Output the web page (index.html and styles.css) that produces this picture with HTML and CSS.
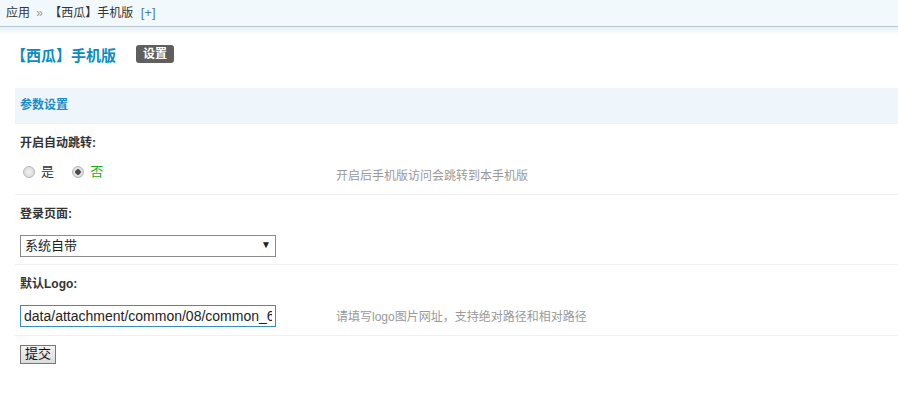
FILE: index.html
```html
<!DOCTYPE html>
<html lang="zh-CN">

<head>
    <meta charset="UTF-8">
    <title>【西瓜】手机版</title>
    <link rel="stylesheet" href="styles.css">
</head>

<body>
    <div class="crumb">应用 <span class="arrow">»</span> 【西瓜】手机版 <span class="add">[+]</span></div>
    <div class="shade"></div>

    <div class="head">
        <h3>【西瓜】手机版</h3>
        <span class="badge">设置</span>
    </div>

    <table class="tb">
        <tr>
            <th colspan="2" class="partition">参数设置</th>
        </tr>
        <tr>
            <td colspan="2" class="label">开启自动跳转:</td>
        </tr>
        <tr class="noborder">
            <td class="rowform">
                <label class="radio"><input type="radio" name="jump" value="1"> 是</label>
                <label class="radio checked"><input type="radio" name="jump" value="0" checked> 否</label>
            </td>
            <td class="tips">开启后手机版访问会跳转到本手机版</td>
        </tr>
        <tr>
            <td colspan="2" class="label">登录页面:</td>
        </tr>
        <tr class="noborder">
            <td class="rowform">
                <span class="select">
                    <select name="login">
                        <option>系统自带</option>
                    </select>
                </span>
            </td>
            <td class="tips"></td>
        </tr>
        <tr>
            <td colspan="2" class="label">默认Logo:</td>
        </tr>
        <tr class="noborder">
            <td class="rowform">
                <input type="text" class="txt" value="data/attachment/common/08/common_6_logo.png">
            </td>
            <td class="tips">请填写logo图片网址，支持绝对路径和相对路径</td>
        </tr>
        <tr>
            <td colspan="2" class="submit"><button type="submit" class="btn">提交</button></td>
        </tr>
    </table>
</body>

</html>
```

FILE: styles.css
```css
* {
    box-sizing: border-box;
}

body {
    margin: 0;
    background-color: #fff;
    color: #333;
    font: 12px "Liberation Sans", "Noto Sans CJK SC", sans-serif;
}

.crumb {
    height: 27px;
    padding-left: 6px;
    line-height: 25px;
    background-color: #f2f9fd;
    border-bottom: 1px solid #bcc9d0;
}

.crumb .arrow {
    color: #999;
    margin: 0 3px;
}

.crumb .add {
    color: #4a7fa8;
    margin-left: 4px;
    font-size: 13px;
}

.shade {
    height: 8px;
    background: linear-gradient(#e3f0fa, #fff);
}

.head {
    display: flex;
    align-items: center;
    height: 28px;
    margin: 5px 0 20px 11px;
}

.head h3 {
    margin: 0;
    font-size: 15px;
    color: #0a8cc4;
}

.badge {
    margin-left: 20px;
    padding: 0 7px;
    height: 18px;
    line-height: 18px;
    border-radius: 3px;
    background-color: #5f5f5f;
    color: #fff;
    font-weight: bold;
}

.tb {
    width: calc(100% - 15px);
    margin-left: 15px;
    border-collapse: collapse;
}

.tb td,
.tb th {
    padding: 0 5px;
    text-align: left;
    vertical-align: top;
}

.partition {
    height: 35px;
    line-height: 35px;
    background-color: #eef5fb;
    color: #1a8bc6;
    font-weight: bold;
}

.label {
    border-top: 1px solid #eef1f3;
    padding-top: 12px !important;
    padding-bottom: 5px !important;
    line-height: 14px;
    font-weight: bold;
}

.rowform {
    width: 316px;
    height: 39px;
    padding-top: 9px !important;
}

.tips {
    padding-top: 14px !important;
    line-height: 14px;
    color: #999;
}

.radio {
    display: inline-flex;
    align-items: center;
    margin: 1px 12px 0 3px;
    line-height: 14px;
    font-size: 13px;
}

.radio.checked {
    color: #1caa1c;
}

.radio input {
    appearance: none;
    width: 12px;
    height: 12px;
    margin: 0 6px 0 0;
    border: 1px solid #b9b9b9;
    border-radius: 50%;
    background: radial-gradient(#f2f2f2, #d3d3d3);
}

.radio input:checked {
    background: radial-gradient(#4b4b4b 0, #4b4b4b 2.5px, #e6e6e6 3px, #d0d0d0);
}

.select {
    position: relative;
    display: inline-block;
}

.select select {
    appearance: none;
    width: 256px;
    height: 22px;
    padding: 0 4px;
    border: 1px solid #8a8a8a;
    border-radius: 0;
    background-color: #fff;
    color: #222;
    font: 13px "Liberation Sans", "Noto Sans CJK SC", sans-serif;
}

.select::after {
    content: "▼";
    position: absolute;
    right: 5px;
    top: 4px;
    font-size: 10px;
    color: #222;
    pointer-events: none;
}

.txt {
    width: 256px;
    height: 22px;
    padding: 0 3px;
    border: 1px solid #3a8dbf;
    color: #222;
    font: 14px "Liberation Sans", "Noto Sans CJK SC", sans-serif;
}

.submit {
    border-top: 1px solid #eef1f3;
    padding-top: 9px !important;
}

.btn {
    height: 19px;
    padding: 0 4px;
    border: 1px solid #777;
    border-radius: 0;
    background: linear-gradient(#f2f2f2, #dcdcdc);
    color: #111;
    font: 13px "Liberation Sans", "Noto Sans CJK SC", sans-serif;
    line-height: 16px;
}
```
